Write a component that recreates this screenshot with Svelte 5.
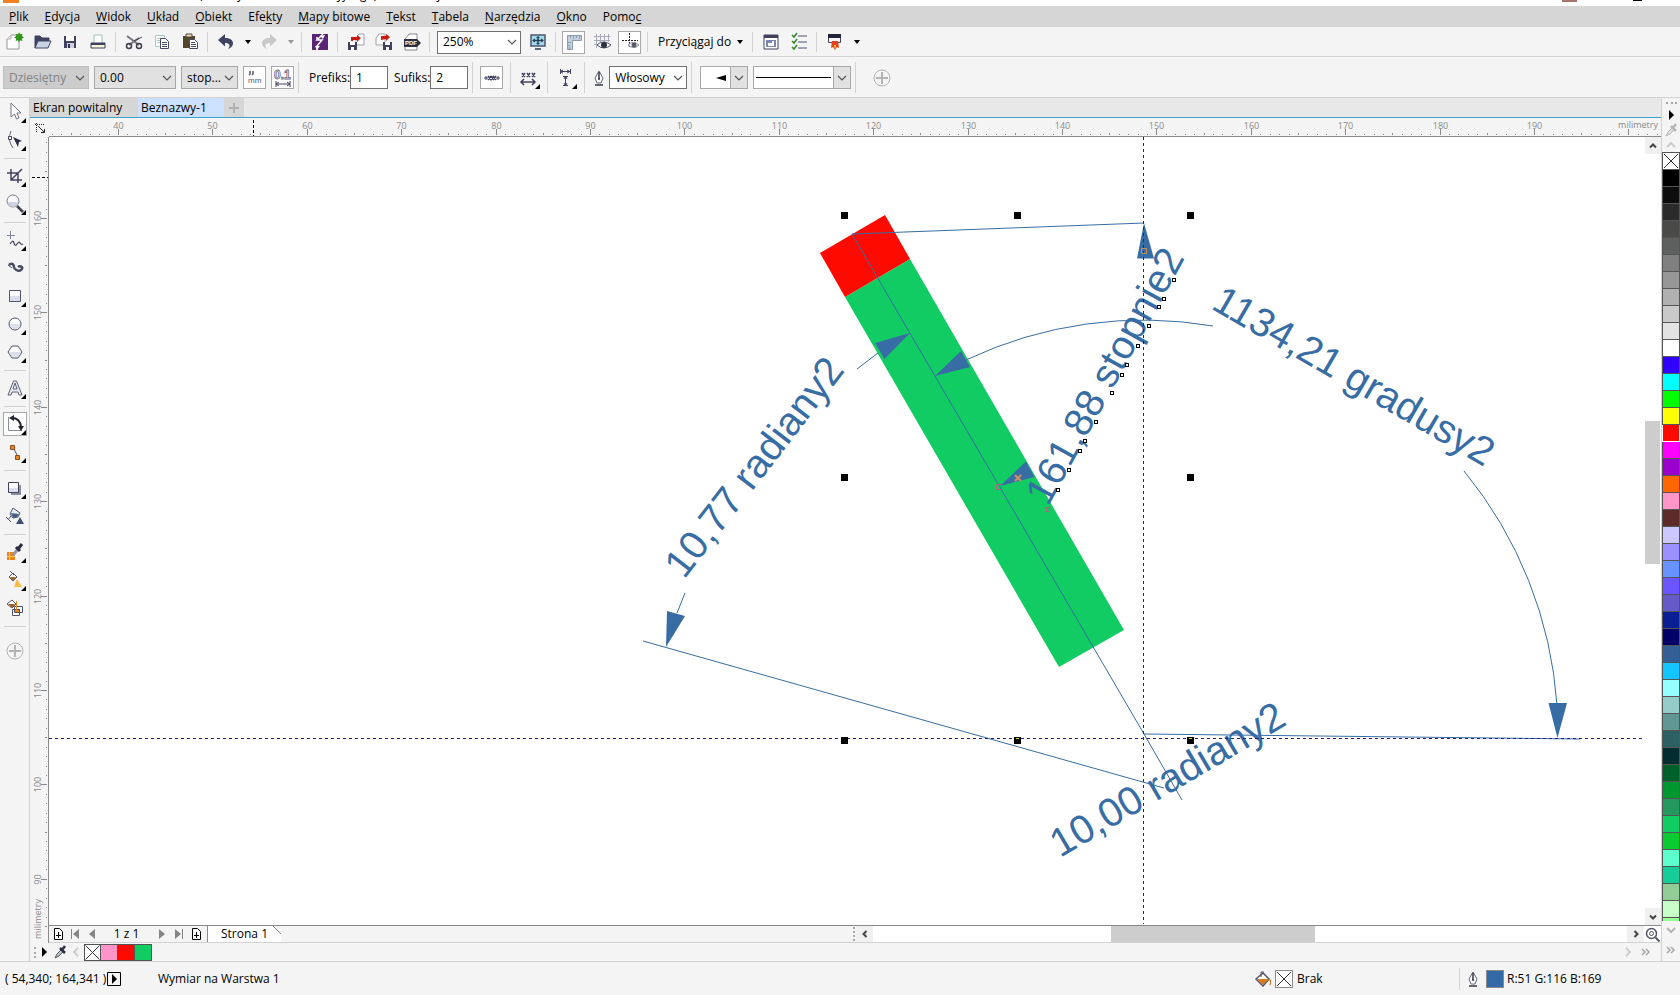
<style>
  :global(body) {
    margin: 0;
    overflow: hidden;
  }

  .app {
    display: flex;
    flex-direction: column;

    height: 100vh;
    background: #f4f4f4;
    color: #000;
    font: 12px/16px "Open Sans", "Noto Sans", sans-serif;
  }

  button,
  input,
  select {
    box-sizing: border-box;
    margin: 0;
    padding: 0;
    border: 0;
    border-radius: 0;
    background: none;
    color: inherit;
    font: inherit;
  }

  svg {
    display: block;
  }

  .title {
    display: flex;
    flex: 0 0 6px;
    align-items: flex-start;

    overflow: hidden;

    background: #fff;
  }

  .logo {
    width: 16px;
    height: 3px;
    margin-left: 3px;
    background: #f58220;
  }

  .titletext {
    flex: 1;

    margin: -13px 0 0 180px;
  }

  .user {
    width: 15px;
    height: 2px;
    margin-right: 56px;
    background: #a5766c;
  }

  .minimize {
    width: 9px;
    height: 1px;
    margin-right: 38px;
    background: #000;
  }

  .menu {
    display: flex;
    flex: 0 0 21px;
    align-items: center;

    padding-left: 1px;
    background: #d6d6d6;
  }

  .menu button {
    padding: 0 8px;
    white-space: nowrap;
  }

  .menu u {
    text-underline-offset: 2px;
  }

  .bar {
    display: flex;
    align-items: center;

    box-sizing: border-box;
    padding-top: 1px;
    border-bottom: 1px solid #d2d2d2;
  }

  .standard {
    flex: 0 0 30px;
  }

  .property {
    flex: 0 0 41px;

    padding-left: 3px;
  }

  .sep {
    align-self: stretch;
    flex: 0 0 1px;

    margin: 4px 4px 4px 3px;
    background: #d2d2d2;
  }

  .property .sep {
    margin: 4px;
  }

  .tool {
    display: grid;
    flex: 0 0 28px;
    place-items: center;

    height: 24px;
  }

  .tool.box {
    flex-basis: 23px;

    height: 23px;
    border: 1px solid #a8a8a8;
    background: #fff;
  }

  .standard .tool.box {
    margin: 0 3px 0 2px;
  }

  .property .gap {
    margin-left: 5px;
  }

  .property .wide {
    margin: 0 3px;
  }

  .caret {
    display: grid;
    flex: 0 0 15px;
    place-items: center;

    height: 24px;
  }

  .snap {
    display: flex;
    align-items: center;
    justify-content: space-between;

    width: 97px;
    padding: 0 6px;
    white-space: nowrap;
  }

  .combo {
    display: grid;

    height: 23px;
    border: 1px solid #707070;
    box-sizing: border-box;
    background: #fff;
  }

  .combo select,
  .combo svg {
    grid-area: 1 / 1;
  }

  .combo select {
    appearance: none;

    width: 100%;
    padding: 0 14px 0 5px;
    outline: 0;
  }

  .combo select:disabled {
    opacity: 1;
  }

  .combo svg {
    align-self: center;
    justify-self: end;

    pointer-events: none;
  }

  .combo.gray {
    border-color: #a8a8a8;
    background: #e1e1e1;
  }

  .combo.off {
    border-color: #bfbfbf;
    background: #ccc;
    color: #838383;
  }

  .zoom {
    width: 84px;
    margin: 0 3px;
  }

  .style {
    width: 86px;
  }

  .precision {
    width: 82px;
  }

  .units {
    width: 57px;
  }

  .width {
    width: 78px;
  }

  .field {
    display: flex;
    align-items: center;

    margin-left: 6px;
    white-space: nowrap;
  }

  .field input {
    width: 38px;
    height: 23px;
    padding: 0 5px;
    border: 1px solid #707070;
    background: #fff;
  }

  .pick {
    display: flex;
    align-items: center;
    justify-content: flex-end;

    height: 23px;
    border: 1px solid #a8a8a8;
    background: #fff;
  }

  .pick .drop {
    display: grid;
    place-items: center;

    width: 16px;
    height: 21px;
    margin-left: 2px;
    border-left: 1px solid #a8a8a8;
    background: #e1e1e1;
  }

  .arrowpick {
    width: 48px;
    margin-left: 4px;
  }

  .linepick {
    width: 98px;
    margin-left: 5px;
  }

  .stroke {
    flex: 1;

    height: 1px;
    margin-left: 2px;
    background: #000;
  }

  .addbtn {
    margin-left: 8px;
  }

  .work {
    display: flex;
    flex: 1;

    min-height: 0;
    border-bottom: 1px solid #d2d2d2;
  }

  .toolbox {
    display: flex;
    flex: 0 0 29px;
    flex-direction: column;
    align-items: center;

    border-right: 1px solid #d2d2d2;
  }

  .toolbox button {
    display: grid;
    flex: 0 0 28px;
    place-items: center;

    width: 28px;
  }

  .toolbox .active svg {
    outline: 1px solid #a8a8a8;
    background: #fff;
  }

  .toolbox .rule {
    flex: 0 0 1px;

    width: 22px;
    margin: 4px 0 3px;
    background: #d2d2d2;
  }

  .toolbox .more {
    flex-basis: 42px;
  }

  .doc {
    display: flex;
    flex: 1;
    flex-direction: column;

    min-width: 0;
  }

  .tabs {
    display: flex;
    flex: 0 0 19px;

    border-bottom: 1px solid #3ba3c7;
    background: #e8e8e8;
    line-height: 19px;
  }

  .tabs button {
    width: 108px;
    padding-left: 3px;
    background: #d6d6d6;
    text-align: left;
    white-space: nowrap;
  }

  .tabs button.current {
    width: 86px;
    background: #cce1ff;
  }

  .tabs button.plus {
    display: grid;
    place-items: center;

    width: 20px;
    padding: 0;
  }

  .sheet {
    display: grid;
    flex: 1;
    grid-template-rows: 19px 1fr 18px;
    grid-template-columns: 19px 1fr 16px;

    min-height: 0;
    background: #fff;
  }

  .corner {
    display: grid;
    place-items: center;

    background: #f4f4f4;
  }

  .ruler {
    position: relative;

    overflow: hidden;

    background: #f4f4f4;
    color: #8a8a8a;
    font-size: 9px;
    line-height: 12px;
  }

  .ruler svg {
    position: absolute;

    width: 100%;
    height: 100%;
  }

  .ruler text {
    fill: #8a8a8a;
    text-anchor: middle;
  }

  .horizontal {
    grid-column: 2 / 4;

    border-bottom: 1px solid #8a8a8a;
  }

  .vertical {
    grid-row: 2 / 4;

    border-right: 1px solid #8a8a8a;
  }

  .unit {
    position: absolute;
    top: 1px;
    right: 3px;
  }

  .vertical .unit {
    top: auto;
    right: auto;
    bottom: 4px;
    left: 2px;

    transform: rotate(180deg);
    writing-mode: vertical-rl;
  }

  .canvas {
    width: 100%;
    height: 100%;
    min-height: 0;
  }

  .canvas text {
    fill: #376da4;
    font: 40px "Liberation Sans", Arial, sans-serif;
  }

  .vscroll {
    display: flex;
    flex-direction: column;
  }

  .arrow {
    display: grid;
    flex: 0 0 17px;
    place-items: center;

    background: #f0f0f0;
  }

  .vscroll .track {
    display: flex;
    flex: 1;
    flex-direction: column;
  }

  .vscroll .thumb {
    width: 15px;
    height: 19%;
    margin-top: 267px;
    background: #cdcdcd;
  }

  .pages {
    display: flex;
    grid-column: 2 / 4;

    box-sizing: border-box;
    border-top: 1px solid #8a8a8a;
    border-bottom: 1px solid #d2d2d2;
  }

  .nav {
    display: flex;
    flex: 0 1 807px;
    align-items: center;

    background: #f4f4f4;
  }

  .nav button {
    display: grid;
    flex: 0 0 17px;
    place-items: center;
  }

  .count {
    width: 53px;
    text-align: center;
  }

  .nav .page {
    display: flex;
    flex: 0 0 74px;
    align-items: center;
    align-self: stretch;

    margin-left: 3px;
    padding-left: 13px;
    border-left: 1px solid #8a8a8a;
    background: linear-gradient(225deg, #f4f4f4 5px, #8a8a8a 5px, #8a8a8a 6px, #fff 6px);
    line-height: 14px;
  }

  .split {
    height: 14px;
    margin-right: 1px;
    margin-left: auto;
    border-left: 2px dotted #a8a8a8;
  }

  .hscroll {
    display: flex;
    flex: 1;
  }

  .hscroll .track {
    flex: 1;
  }

  .hscroll .thumb {
    width: 27%;
    height: 100%;
    margin-left: 238px;
    background: #cdcdcd;
  }

  .docpalette {
    display: flex;
    flex: 0 0 18px;
    align-items: center;
  }

  .docpalette button,
  .palette button {
    display: grid;
    place-items: center;
  }

  .docpalette .grip {
    height: 11px;
    margin-left: 4px;
    border-left: 2px dotted #a8a8a8;
  }

  .docpalette .mini {
    width: 16px;
  }

  .docpalette .end {
    margin-left: auto;
  }

  .docpalette .last {
    margin: 0 7px 0 2px;
  }

  .docpalette .swatch,
  .palette .swatch {
    flex: 0 0 17px;

    height: 17px;
    border: 1px solid #555;
    border-left-width: 0;
  }

  .docpalette .swatch:first-child {
    border-left-width: 1px;
  }

  .chips {
    display: flex;
  }

  .palette {
    display: flex;
    flex: 0 0 18px;
    flex-direction: column;
    align-items: center;

    border-left: 1px solid #d2d2d2;
  }

  .palette .grip {
    width: 11px;
    height: 2px;
    margin: 4px 0 1px;
    border-top: 2px dotted #a8a8a8;
  }

  .palette .mini {
    flex: 0 0 15px;
  }

  .colors {
    display: flex;
    flex: 1;
    flex-direction: column;

    overflow: hidden;

    width: 18px;
    min-height: 0;
    border-top: 1px solid #555;
  }

  .palette .swatch {
    width: 18px;
    border-top-width: 0;
    border-left-width: 1px;
  }

  .palette .swatch.marked {
    border-color: #fff;
  }

  .palette .foot {
    flex: 0 0 18px;
  }

  .palette .foot:last-child {
    flex-basis: 22px;
  }

  .status {
    display: flex;
    flex: 0 0 33px;
    align-items: center;

    padding-left: 5px;
    white-space: nowrap;
  }

  .coords {
    width: 102px;
  }

  .hint {
    flex: 1;

    margin-left: 37px;
  }

  .fillinfo {
    display: flex;
    align-items: center;
    gap: 4px;

    width: 204px;
  }

  .outlineinfo {
    display: flex;
    align-items: center;
    gap: 3px;

    width: 217px;
    height: 22px;
    border-left: 1px solid #d2d2d2;
    padding-left: 3px;
  }

  .chip {
    display: grid;
    place-items: center;

    width: 16px;
    height: 16px;
    border: 1px solid #8a8a8a;
  }
</style>

<script>
  const menu = [
    ["", "P", "lik"],
    ["", "E", "dycja"],
    ["", "W", "idok"],
    ["", "U", "kład"],
    ["", "O", "biekt"],
    ["Efe", "k", "ty"],
    ["", "M", "apy bitowe"],
    ["", "T", "ekst"],
    ["", "T", "abela"],
    ["", "N", "arzędzia"],
    ["", "O", "kno"],
    ["Pomo", "c", ""],
  ];

  const flyout = '<path d="M22 17v5h-5z" fill="#000"/>';

  // every icon is drawn in a 22 x 22 box
  const icons = {
    new: '<path d="M4 8l4-4h8v14H4z" fill="#fff" stroke="#98989f"/><path d="M4 8h4V4" fill="#e6e6e6" stroke="#b4b4ba"/><path d="M16 1l1.200 2.300 2.300-.5-.5 2.300L21 6.500l-2 1 .3 2.500-2.300-.7L16 11.500l-1-2.200-2.300.6.5-2.400-2.200-1 2.200-1.300-.5-2.400 2.300.6z" fill="#2f9418"/>',
    open: '<path d="M4 17V5h5l2 2h7v3" fill="#3f4260" stroke="#3f4260"/><path d="M4 17l3-7h13l-3 7z" fill="#c9d3e3" stroke="#454864"/>',
    save: '<path d="M5 5h12v12H5z" fill="#41415f"/><path d="M7 5h8v5H7z" fill="#fff"/><path d="M8 12h7v5H8z" fill="#cfd2de"/><path d="M9 13h2v4H9z" fill="#33334e"/>',
    print: '<path d="M7 4h8v9H7z" fill="#fff" stroke="#9cc5b4"/><path d="M4 12h14v5H4z" fill="#f6f6d9" stroke="#41415f"/><path d="M4 12h14v2H4z" fill="#41415f"/>',
    cut: '<path d="M4 5l12 9M16 7L6 14" stroke="#77777f" stroke-width="2"/><path d="M11 10l8-4" stroke="#44444c"/><circle cx="6" cy="15" r="2.500" fill="none" stroke="#3f3f4c" stroke-width="1.500"/><circle cx="16" cy="15" r="2.500" fill="none" stroke="#3f3f4c" stroke-width="1.500"/>',
    copy: '<path d="M4.500 4.500h9v11h-9z" fill="#fff" stroke="#a6cdc1"/><path d="M6 7.500h5M6 9.500h3M6 11.500h3" stroke="#a6cdc1"/><path d="M9.500 7.500h5l3 3v7h-8z" fill="#fff" stroke="#46496a"/><path d="M11 11.500h5M11 13.500h5M11 15.500h5" stroke="#46496a"/>',
    paste: '<path d="M4 5h12v12H4z" fill="#54452f"/><path d="M7 3h6v3H7z" fill="#e7e2c4" stroke="#54452f"/><path d="M10.500 8.500h5l3 3v6h-8z" fill="#fff" stroke="#46496a"/><path d="M12 11.500h4M12 13.500h5M12 15.500h5" stroke="#46496a"/>',
    undo: '<path d="M3 9l7-6v4c6 0 8 2.500 8 5.500 0 2.500-2 4.500-5 5.500 3-3.500 1.500-6-3-6v3.500z" fill="#3f4260"/>',
    redo: '<path d="M19 9l-7-6v4c-6 0-8 2.500-8 5.500 0 2.500 2 4.500 5 5.500-3-3.500-1.500-6 3-6v3.500z" fill="#c9c9c9"/>',
    launch: '<path d="M3 3h16v16H3z" fill="#5a2574"/><path d="M14 3l-6 6h5l-5 6v4M8 9V6" fill="none" stroke="#fff" stroke-width="1.500"/><path d="M6 15h5l-3 4zM16 4l-5 1 3 3z" fill="#fff"/>',
    import: '<path d="M11 7l3-4h5v11h-8z" fill="#fff" stroke="#a0a0a8"/><path d="M3 11h9v8H3z" fill="#41415f"/><path d="M5 11h5v3H5zM6 16h3v3H6z" fill="#fff"/><path d="M6 10V6h6V4l4 3-4 4V9H8v1z" fill="#c71b12"/>',
    export: '<path d="M3 7l3-4h6v11H3z" fill="#fff" stroke="#a0a0a8"/><path d="M10 11h9v8h-9z" fill="#41415f"/><path d="M12 11h5v3h-5zM13 16h3v3h-3z" fill="#fff"/><path d="M8 9V5h5V3l4 3-4 4V8z" fill="#c71b12"/>',
    pdf: '<path d="M4 8l4-5h8v16H4z" fill="#fff" stroke="#85858f"/><path d="M3 8h13l4 4-4 4H3z" fill="#2d2f42"/><text x="4" y="14" font-size="6" font-weight="700" fill="#fff" font-family="Liberation Sans">PDF</text>',
    fit: '<path d="M4 4h14v11H4z" fill="#a5dbe9" stroke="#4b5570" stroke-width="1.500"/><path d="M8 18h6M6 9.500h10M11 6v7" stroke="#25405e" stroke-width="1.500"/><path d="M5 9.500l3-2v4zM17 9.500l-3-2v4zM11 5l-2 2h4zM11 14l-2-2h4z" fill="#25405e"/>',
    rulers: '<path d="M4.500 4.500h14v5h-9v9h-5z" fill="#c3d0de" stroke="#8c9bb0"/><path d="M7.500 5v2M10.500 5v3M13.500 5v2M16.500 5v3M5 11.500h3M5 14.500h2M5 17h3" stroke="#8c9bb0"/>',
    grid: '<path d="M5.500 3v14M9.500 3v14M13.500 3v8M17.500 3v8M3 5.500h16M3 9.500h16M3 13.500h7" stroke="#a8a8ba"/><path d="M6 14q6-6 14 0-7 6-14 0z" fill="#fff" stroke="#55555f"/><circle cx="13" cy="14" r="3" fill="#2c3444"/>',
    guides: '<path d="M10.500 2v15M3 9.500h16" stroke="#222" stroke-dasharray="2 1"/><path d="M9 14q5-5 11 0-5 5-11 0z" fill="#fff" stroke="#8c8c94"/><circle cx="15" cy="14" r="2.500" fill="#555d6b"/>',
    options: '<path d="M4 4h14v14H4z" fill="#fff" stroke="#41415f"/><path d="M4 4h14v3H4z" fill="#41415f"/><path d="M6 9h10v7H6z" fill="#7c84b4"/><path d="M8 12h4v-2h2v5H8z" fill="#fff"/>',
    list: '<path d="M10 5h9M10 11h9M10 17h9" stroke="#85899c" stroke-width="1.500"/><path d="M4 4l2 2 3-4M4 10l2 2 3-4M4 16l2 2 3-4" fill="none" stroke="#36852b" stroke-width="1.500"/>',
    app: '<path d="M4.500 3.500h12v8h-12z" fill="#f7f7fa" stroke="#41415f"/><path d="M4 3h13v4H4z" fill="#222538"/><path d="M8 10h6l1 7-2-1-2 3-2-3-2 1z" fill="#e2421f"/><path d="M10 14h2l-1 5z" fill="#ffc533"/>',
    mm: '<path d="M6 4v3l-1 1M9 4v3l-1 1" fill="none" stroke="#55576b" stroke-width="1.500"/><text x="4" y="16" font-size="8" fill="#55576b" font-family="Liberation Sans">mm</text>',
    decimal: '<text x="2" y="12" font-size="12" font-weight="700" fill="#fff" stroke="#656980" stroke-width=".8" font-family="Liberation Sans">0.1</text><path d="M4 14v6M18 14v6M4 17h14M7 15l-3 2 3 2M15 15l3 2-3 2" fill="none" stroke="#41415f"/>',
    textpos: '<path d="M3 11h4M15 11h4M5 9v4M17 9v4" stroke="#41415f"/><path d="M7 9l3 4M10 9l-3 4M10 9l3 4M13 9l-3 4M12 9l3 4M15 9l-3 4" stroke="#41415f" stroke-width="1.500"/>',
    textalign: '<path d="M4 6l3 4M7 6l-3 4M9 6l3 4M12 6l-3 4M14 6l3 4M17 6l-3 4" stroke="#41415f" stroke-width="1.500"/><path d="M3 15h14M6 12l-3 3 3 3M14 12l3 3-3 3" fill="none" stroke="#41415f" stroke-width="1.500"/>' + flyout,
    extension: '<path d="M5.500 2v5M15.500 2v5M5 4.500h10M8 3L5 4.500 8 6M12 3l3 1.500L12 6M8 9.500h5M8 18.500h5M10.500 9v10M9 12l1.500-3 1.500 3M9 16l1.500 3 1.500-3" fill="none" stroke="#41415f"/>' + flyout,
    pen: '<path d="M11 4l4 7-2 5H9l-2-5z" fill="#fff" stroke="#63667c"/><path d="M11 5v7M7 18h8" stroke="#34364b" stroke-width="1.500"/><circle cx="11" cy="12" r="1" fill="#34364b"/>',
    plus: '<circle cx="11" cy="11" r="8" fill="none" stroke="#b4b4b4"/><path d="M11 5v12M5 11h12" stroke="#b4b4b4" stroke-width="2"/>',
    pick: '<path d="M7 2v14l3.500-3 2 5 2.500-1-2-5h4z" fill="#fff" stroke="#73738a"/>' + flyout,
    shape: '<path d="M7 2q-4 9 2 17" fill="none" stroke="#62657c"/><path d="M4.500 7.500h3v3h-3z" fill="#fff" stroke="#41415f"/><path d="M9 8l9 4-3 1-1 5z" fill="#2b2d42"/>' + flyout,
    crop: '<path d="M7 4v11h11M3 8h11v10M7 15L18 4" fill="none" stroke="#41415f" stroke-width="1.500"/>' + flyout,
    zoom: '<circle cx="9" cy="8" r="6" fill="#f7f9ff" stroke="#7d7d8b"/><path d="M4 9h10a5 5 0 0 1-10 0z" fill="#ced3e0"/><path d="M13 13l6 6" stroke="#3f4052" stroke-width="2.500"/>' + flyout,
    freehand: '<path d="M6.500 2v8M3 6.500h8" stroke="#8385a0"/><path d="M6 15q3-5 4-1t3 1 3-1 3 1" fill="none" stroke="#41415f" stroke-width="1.200"/>' + flyout,
    artistic: '<path d="M5 8c3-3 5 0 5 2s4 5 7 3 0-5-3-3" fill="none" stroke="#494b60" stroke-width="2.500"/><path d="M4 8l4 3" stroke="#494b60"/>',
    rect: '<path d="M5.500 5.500h11v11h-11z" fill="#fff" stroke="#51536b"/><path d="M6 11h10v5H6z" fill="#dcdfe9"/>' + flyout,
    ellipse: '<circle cx="11" cy="11" r="6" fill="#fff" stroke="#51536b"/><path d="M6 11h10a5 5 0 0 1-10 0z" fill="#dcdfe9"/>' + flyout,
    polygon: '<path d="M8 5h6l4 6-4 6H8l-4-6z" fill="#fff" stroke="#51536b"/><path d="M5 11h12l-3 5H8z" fill="#dcdfe9"/>' + flyout,
    text: '<path d="M4 18L9.500 4h3L18 18h-3l-1-3H8l-1 3zM9 12h4l-2-6z" fill="#e9ebf3" stroke="#5e6078"/>' + flyout,
    dimension: '<path d="M4.500 4v13.500H18" fill="none" stroke="#8a8ca0"/><path d="M8 5q8 0 9 9" fill="none" stroke="#20222f" stroke-width="2"/><path d="M5 5l5-3v6zM17 18l-3-5h6z" fill="#20222f"/>' + flyout,
    connector: '<path d="M9 6l5 10" stroke="#51536b"/><path d="M6.500 4.500h4v4h-4zM11.500 14.500h4v4h-4z" fill="#ee8420" stroke="#8f4d1c"/>' + flyout,
    shadow: '<path d="M7 8h10v10H7z" fill="#8c8ca5"/><path d="M4.500 5.500h10v10h-10z" fill="#fff" stroke="#41415f"/><path d="M5 11h9v4H5z" fill="#dcdfe9"/>' + flyout,
    transparency: '<path d="M9 3l7 5-2 4-5 1-3-4z" fill="#e2edf7" stroke="#51536b"/><path d="M7 8l8 1-2 3-4 1z" fill="#44607d"/><path d="M7 11l-3 4M2 12l5 5" stroke="#51536b"/><path d="M16 12l4 7h-8z" fill="#3e4e6b"/>',
    eyedropper: '<path d="M3 11h8v8H3z" fill="#eb8519"/><path d="M5.500 11v8M3 15.500h8" stroke="#ffc66b"/><path d="M9 14l5-6" stroke="#9298a8" stroke-width="3"/><path d="M12 6l4 4M14 8l4-5" stroke="#2b2d42" stroke-width="3"/>' + flyout,
    fill: '<path d="M5 8l4-4 4 4-4 4z" fill="#fff" stroke="#51536b"/><path d="M6 8h6l-3 4z" fill="#a06125"/><path d="M6 2l4 4" stroke="#51536b"/><path d="M13 10l5 8h-8z" fill="#f7bd3e"/>' + flyout,
    smart: '<path d="M3 7l5-4 4 4-4 4z" fill="#fff" stroke="#51536b"/><path d="M4 7h7l-3 4z" fill="#a06125"/><path d="M10.500 9.500h8v6h-8z" fill="#fff" stroke="#51536b"/><path d="M8.500 12.500h7v6h-7z" fill="#fff" stroke="#51536b"/><path d="M10.500 12.500h5v3h-5z" fill="#eb8519" stroke="#51536b"/><path d="M12.500 4v9" stroke="#eb8519"/>',
    origin: '<path d="M7.500 6v9M6 7.500h10" stroke="#222" stroke-dasharray="1 1"/><path d="M9 9l6 6M15.500 12v3.500H12" fill="none" stroke="#222"/>',
    magnify: '<circle cx="10" cy="10" r="5" fill="#fff" stroke="#51536b" stroke-width="1.500"/><circle cx="10" cy="10" r="2" fill="none" stroke="#51536b"/><path d="M14 14l4 4" stroke="#51536b" stroke-width="2"/>',
    addpage: '<path d="M7.500 5.500h5l3 3v8h-8z" fill="#fff" stroke="#000"/><path d="M11.500 9v6M9 12.500h5" stroke="#000"/>',
    first: '<path d="M7.500 6v10" stroke="#858585"/><path d="M15 6v10l-6-5z" fill="#858585"/>',
    prev: '<path d="M14 6v10l-6-5z" fill="#858585"/>',
    next: '<path d="M8 6v10l6-5z" fill="#858585"/>',
    last: '<path d="M14.500 6v10" stroke="#858585"/><path d="M7 6v10l6-5z" fill="#858585"/>',
    play: '<path d="M9 6v10l5-5z" fill="#000"/>',
    boxplay: '<path d="M4.500 4.500h13v13h-13z" fill="none" stroke="#000"/><path d="M9 6v10l5-5z" fill="#000"/>',
    dropper: '<path d="M6 17l2-4 5-5 2 2-5 5z" fill="#b9c6c9" stroke="#555a68"/><path d="M11 7l5 5M13 9l3-4" stroke="#2b2d42" stroke-width="2.500"/>',
    dropperoff: '<path d="M6 17l2-4 5-5 2 2-5 5z" fill="#ddd" stroke="#bbb"/><path d="M11 7l5 5M13 9l3-4" stroke="#b8b8b8" stroke-width="2.500"/>',
    bucket: '<path d="M4 11l7-6 6 6-6 7z" fill="#fff" stroke="#51536b" stroke-width="1.500"/><path d="M5 11h12l-6 6z" fill="#d87b1e"/><path d="M9 9V4h3" fill="none" stroke="#51536b"/><path d="M17 11q3 2 1 6" fill="none" stroke="#d87b1e" stroke-width="1.500"/>',
    cross: '<path d="M4 4l14 14M18 4L4 18" stroke="#333"/>',
    caret: '<path d="M8 9h6l-3 4z" fill="#000"/>',
    caretoff: '<path d="M8 9h6l-3 4z" fill="#999"/>',
    down: '<path d="M7 9l4 4 4-4" fill="none" stroke="#555" stroke-width="1.200"/>',
    downbold: '<path d="M8 9.500l3 3 3-3" fill="none" stroke="#444" stroke-width="2"/>',
    upbold: '<path d="M8 12.500l3-3 3 3" fill="none" stroke="#444" stroke-width="2"/>',
    leftbold: '<path d="M12.500 8l-3 3 3 3" fill="none" stroke="#444" stroke-width="2"/>',
    rightbold: '<path d="M9.500 8l3 3-3 3" fill="none" stroke="#444" stroke-width="2"/>',
    uplight: '<path d="M7 13l4-4 4 4" fill="none" stroke="#ccc" stroke-width="2"/>',
    downlight: '<path d="M7 9l4 4 4-4" fill="none" stroke="#b4b4b4" stroke-width="2"/>',
    leftlight: '<path d="M13 7l-4 4 4 4" fill="none" stroke="#ccc" stroke-width="2"/>',
    rightlight: '<path d="M9 7l4 4-4 4" fill="none" stroke="#ccc" stroke-width="2"/>',
    double: '<path d="M7 8l3 3-3 3M11 8l3 3-3 3" fill="none" stroke="#a8a8a8" stroke-width="1.500"/>',
    arrowhead: '<path d="M6 11l10-3v6z" fill="#000"/>',
    tabplus: '<path d="M11 6v10M6 11h10" stroke="#b0b0b0" stroke-width="2"/>',
  };

  const tools = [
    "pick", "shape", "|", "crop", "zoom", "|",
    "freehand", "artistic", "rect", "ellipse", "polygon", "|",
    "text", "|", "dimension", "connector", "|",
    "shadow", "transparency", "|", "eyedropper", "fill", "smart", "|",
  ];

  const palette = [
    "#000", "#0d0d0d", "#2b2b2b", "#4a4a48", "#5e605f", "#808080", "#969696", "#b0b0b0",
    "#c9c9c9", "#e2e2e2", "#fff", "#3200ff", "#0ff", "#0f0", "#ff0", "#ff0a00",
    "#f0f", "#90c", "#f60", "#ff94c9", "#5e2b2b", "#ccc8ff", "#9a90ff", "#6892ff",
    "#6b55ff", "#6659c8", "#0b1f94", "#006", "#335f96", "#12c4ff", "#96ffff", "#94cbc9",
    "#609795", "#2d6062", "#002d2f", "#006029", "#009630", "#24985f", "#10cc62", "#0acc32",
    "#5cffcb", "#16cc98", "#92cc96", "#c8ffc8", "#96ff96",
  ];

  const docColors = ["#ff94c9", "#ff0a00", "#10cc62"];

  // 1 mm is 9.44 px at 250%
  const scale = 9.44;
  const tickX = (mm) => Math.round(69 + (mm - 40) * scale) + 0.5;
  const tickY = (mm) => Math.round(81 + (160 - mm) * scale) + 0.5;
  const size = (mm) => (mm % 10 === 0 ? 6 : mm % 5 === 0 ? 2 : 1);

  const columns = Array.from({ length: 171 }, (_, i) => i + 33);
  const rows = Array.from({ length: 84 }, (_, i) => 168 - i);

  const handles = [
    [844, 215], [1017, 215], [1190, 215],
    [844, 477], [1190, 477],
    [844, 740], [1017, 740], [1190, 740],
  ];

  const nodes = [
    [1058, 490], [1069, 470], [1080, 451], [1085, 441], [1096, 422], [1112, 393], [1122, 375],
    [1127, 365], [1138, 346], [1149, 326], [1159, 307], [1164, 299], [1174, 280],
  ];

  let prefix = "1";
  let suffix = "2";
  let activeTool = "dimension";
</script>

{#snippet icon(name, box = 22)}
  <svg width={box} height={box} viewBox="{(22 - box) / 2} {(22 - box) / 2} {box} {box}" aria-hidden="true">{@html icons[name]}</svg>
{/snippet}

{#snippet tool(name, cls = "")}
  <button class="tool {cls}" aria-label={name}>{@render icon(name, cls ? 20 : 22)}</button>
{/snippet}

{#snippet combo(label, value, cls, disabled = false)}
  <div class="combo {cls}">
    <select aria-label={label} {disabled}>
      <option>{value}</option>
    </select>
    {@render icon("down", 16)}
  </div>
{/snippet}

<div class="app">
  <div class="title">
    <span class="logo"></span>
    <span class="titletext">(Dla użytkownika edukacyjnego) - Beznazwy-1</span>
    <span class="user"></span>
    <span class="minimize"></span>
  </div>

  <nav class="menu">
    {#each menu as [before, key, after]}
      <button>{before}<u>{key}</u>{after}</button>
    {/each}
  </nav>

  <div class="bar standard">
    {@render tool("new")}
    {@render tool("open")}
    {@render tool("save")}
    {@render tool("print")}
    <span class="sep"></span>
    {@render tool("cut")}
    {@render tool("copy")}
    {@render tool("paste")}
    <span class="sep"></span>
    {@render tool("undo")}
    <button class="caret" aria-label="undo list">{@render icon("caret", 14)}</button>
    {@render tool("redo")}
    <button class="caret" aria-label="redo list">{@render icon("caretoff", 14)}</button>
    <span class="sep"></span>
    {@render tool("launch")}
    <span class="sep"></span>
    {@render tool("import")}
    {@render tool("export")}
    {@render tool("pdf")}
    <span class="sep"></span>
    {@render combo("zoom", "250%", "zoom")}
    {@render tool("fit")}
    <span class="sep"></span>
    {@render tool("rulers", "box")}
    {@render tool("grid")}
    {@render tool("guides", "box")}
    <span class="sep"></span>
    <button class="snap">Przyciągaj do {@render icon("caret", 6)}</button>
    <span class="sep"></span>
    {@render tool("options")}
    {@render tool("list")}
    <span class="sep"></span>
    {@render tool("app")}
    <button class="caret" aria-label="app list">{@render icon("caret", 14)}</button>
  </div>

  <div class="bar property">
    {@render combo("style", "Dziesiętny", "style off", true)}
    {@render combo("precision", "0.00", "precision gray gap")}
    {@render combo("units", "stop...", "units gray gap")}
    {@render tool("mm", "box gap")}
    {@render tool("decimal", "box gap")}
    <span class="sep"></span>
    <label class="field">Prefiks: <input bind:value={prefix} /></label>
    <label class="field">Sufiks: <input bind:value={suffix} /></label>
    <span class="sep"></span>
    {@render tool("textpos", "box wide")}
    <span class="sep"></span>
    {@render tool("textalign")}
    <span class="sep"></span>
    {@render tool("extension")}
    <span class="sep"></span>
    {@render icon("pen", 20)}
    {@render combo("width", "Włosowy", "width")}
    <span class="sep"></span>
    <button class="pick arrowpick" aria-label="arrowhead">
      {@render icon("arrowhead", 14)}
      <span class="drop">{@render icon("down", 14)}</span>
    </button>
    <button class="pick linepick" aria-label="line style">
      <span class="stroke"></span>
      <span class="drop">{@render icon("down", 14)}</span>
    </button>
    <span class="sep"></span>
    <button class="tool addbtn" aria-label="customize">{@render icon("plus")}</button>
  </div>

  <div class="work">
    <div class="toolbox">
      {#each tools as name}
        {#if name === "|"}
          <span class="rule"></span>
        {:else}
          <button class:active={name === activeTool} aria-label={name} on:click={() => (activeTool = name)}>
            {@render icon(name)}
          </button>
        {/if}
      {/each}
      <button class="more" aria-label="more tools">{@render icon("plus")}</button>
    </div>

    <div class="doc">
      <div class="tabs">
        <button>Ekran powitalny</button>
        <button class="current">Beznazwy-1</button>
        <button class="plus" aria-label="new tab">{@render icon("tabplus", 16)}</button>
      </div>

      <div class="sheet">
        <div class="corner">{@render icon("origin", 16)}</div>
        <div class="ruler horizontal">
          <svg>
            {#each columns as mm}
              <path d="M{tickX(mm)} 17v-{size(mm)}" stroke="#8a8a8a" />
              {#if mm % 10 === 0 && mm < 200}
                <text x={tickX(mm)} y="11">{mm}</text>
              {/if}
            {/each}
            <path d="M204.500 2v16" stroke="#000" stroke-dasharray="3 2" />
          </svg>
          <span class="unit">milimetry</span>
        </div>

        <div class="ruler vertical">
          <svg>
            {#each rows as mm}
              <path d="M17 {tickY(mm)}h-{size(mm)}" stroke="#8a8a8a" />
              {#if mm % 10 === 0}
                <text transform="translate(11 {tickY(mm)}) rotate(-90)">{mm}</text>
              {/if}
            {/each}
            <path d="M2 40.500h16" stroke="#000" stroke-dasharray="3 2" />
          </svg>
          <span class="unit">milimetry</span>
        </div>

        <svg class="canvas">
          <g transform="translate(-49 -137)">
            <path d="M910 259L845 297 1059 667 1124 630z" fill="#10cc62" />
            <path d="M885 215L820 253 845 297 910 259z" fill="#ff0a00" />

            <g fill="none" stroke="#376da4">
              <path d="M1144 223L852 234 1144 734 1182 800" />
              <path d="M1144 734L1580 739" />
              <path d="M643 641L1164 788" />
              <path d="M878 353L857 369M685 593L677 613" />
              <path d="M966 360A414 414 0 0 1 1213 326" />
              <path d="M1464 471A414 414 0 0 1 1557 705" />
            </g>

            <g fill="#376da4">
              <path d="M1144 223l-7 35.500h17z" />
              <path d="M910 333l-35 10 9.500 16z" />
              <path d="M935 376l26-25 9 16z" />
              <path d="M1000 486l26-24.500 8.500 15.500z" />
              <path d="M666 647l1-36 18 5z" />
              <path d="M1557.500 738l-9-35h18.500z" />
            </g>

            <text transform="translate(684 580) rotate(-52.400)">10,77 radiany2</text>
            <text transform="translate(1048 507) rotate(-61.200)">161,88 stopnie2</text>
            <text transform="translate(1210 308) rotate(30.100)">1134,21 gradusy2</text>
            <text transform="translate(1060 858) rotate(-30.400)">10,00 radiany2</text>

            <g stroke="#2d1a80" stroke-dasharray="3 3">
              <path d="M1143.500 137V924" />
              <path d="M49 738.500H1643" />
            </g>

            {#each handles as [x, y]}
              <rect x={x - 3} y={y - 3} width="7" height="7" />
            {/each}
            {#each nodes as [x, y]}
              <rect x={x - 1.5} y={y - 1.5} width="3" height="3" fill="#fff" stroke="#000" />
            {/each}

            <path d="M1016 738.500h3M1189 738.500h3" stroke="#b8e61e" />
            <path d="M1141.500 248.500h5v5h-5z" fill="none" stroke="#c9905f" />
            <path d="M996.500 484.500h5v5h-5zM1046.500 507.500h3v4h-3z" fill="none" stroke="#b0607c" />
            <path d="M1015 475l6 6M1021 475l-6 6" stroke="#c9905f" stroke-width="2" />
          </g>
        </svg>

        <div class="vscroll">
          <button class="arrow" aria-label="scroll up">{@render icon("upbold", 14)}</button>
          <div class="track"><div class="thumb"></div></div>
          <button class="arrow" aria-label="scroll down">{@render icon("downbold", 14)}</button>
        </div>

        <div class="pages">
          <div class="nav">
            <button aria-label="add page before">{@render icon("addpage", 16)}</button>
            <button aria-label="first page">{@render icon("first", 16)}</button>
            <button aria-label="previous page">{@render icon("prev", 16)}</button>
            <span class="count">1 z 1</span>
            <button aria-label="next page">{@render icon("next", 16)}</button>
            <button aria-label="last page">{@render icon("last", 16)}</button>
            <button aria-label="add page after">{@render icon("addpage", 16)}</button>
            <button class="page">Strona 1</button>
            <span class="split"></span>
          </div>
          <div class="hscroll">
            <button class="arrow" aria-label="scroll left">{@render icon("leftbold", 14)}</button>
            <div class="track"><div class="thumb"></div></div>
            <button class="arrow" aria-label="scroll right">{@render icon("rightbold", 14)}</button>
            <button aria-label="navigator">{@render icon("magnify", 17)}</button>
          </div>
        </div>
      </div>

      <div class="docpalette">
        <span class="grip"></span>
        <button class="mini" aria-label="palette menu">{@render icon("play", 14)}</button>
        <button class="mini" aria-label="sample color">{@render icon("dropper", 16)}</button>
        <button class="mini" aria-label="scroll colors back">{@render icon("leftlight", 14)}</button>
        <div class="chips">
          <button class="swatch" style:background="#fff" aria-label="no color">{@render icon("cross", 15)}</button>
          {#each docColors as color}
            <button class="swatch" style:background={color} aria-label={color}></button>
          {/each}
        </div>
        <button class="mini end" aria-label="scroll colors">{@render icon("rightlight", 14)}</button>
        <button class="mini last" aria-label="expand colors">{@render icon("double", 14)}</button>
      </div>
    </div>

    <div class="palette">
      <span class="grip"></span>
      <button class="mini" aria-label="palette menu">{@render icon("play", 14)}</button>
      <button class="mini" aria-label="sample color">{@render icon("dropperoff", 14)}</button>
      <button class="mini" aria-label="scroll colors up">{@render icon("uplight", 14)}</button>
      <div class="colors">
        <button class="swatch" style:background="#fff" aria-label="no color">{@render icon("cross", 16)}</button>
        {#each palette as color}
          <button class="swatch" class:marked={color === "#ff0a00"} style:background={color} aria-label={color}></button>
        {/each}
      </div>
      <button class="foot" aria-label="scroll colors down">{@render icon("downlight", 14)}</button>
      <button class="foot" aria-label="expand palette">{@render icon("double", 14)}</button>
    </div>
  </div>

  <div class="status">
    <span class="coords">( 54,340; 164,341 )</span>
    <button aria-label="coordinates">{@render icon("boxplay", 14)}</button>
    <span class="hint">Wymiar na Warstwa 1</span>
    <div class="fillinfo">
      {@render icon("bucket", 16)}
      <span class="chip" style:background="#fff">{@render icon("cross", 16)}</span>
      Brak
    </div>
    <div class="outlineinfo">
      {@render icon("pen", 20)}
      <span class="chip" style:background="#3369a5"></span>
      R:51 G:116 B:169
    </div>
  </div>
</div>
